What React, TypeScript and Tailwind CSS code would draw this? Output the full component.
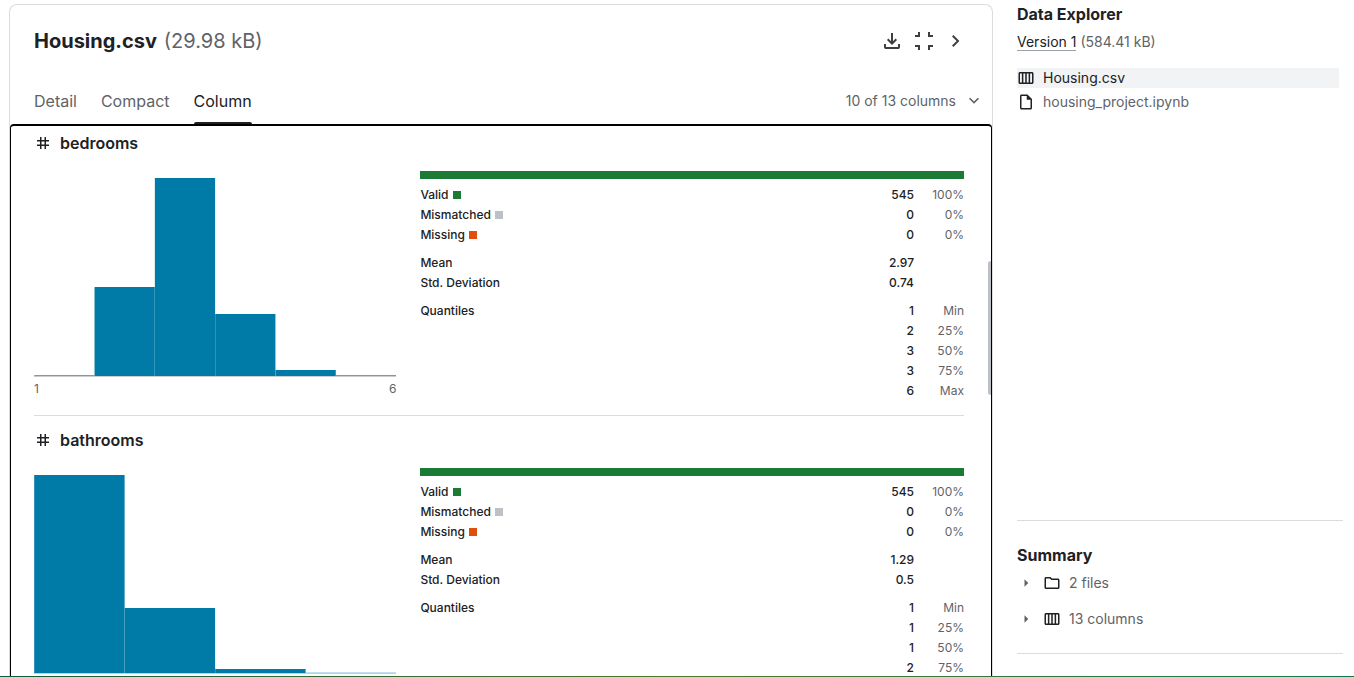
import React from "react";
import {
  MdArrowRight,
  MdOutlineCalendarViewWeek,
  MdOutlineFolder,
  MdOutlineInsertDriveFile,
  MdTag,
} from "react-icons/md";

type Column = {
  name: string;
  counts: number[];
  range?: [string, string];
  mean: string;
  deviation: string;
  quantiles: string[];
};

const columns: Column[] = [
  {
    name: "bedrooms",
    counts: [2, 136, 300, 95, 10, 2],
    range: ["1", "6"],
    mean: "2.97",
    deviation: "0.74",
    quantiles: ["1", "2", "3", "3", "6"],
  },
  {
    name: "bathrooms",
    counts: [401, 133, 10, 1],
    mean: "1.29",
    deviation: "0.5",
    quantiles: ["1", "1", "1", "2"],
  },
];

const quantileLabels = ["Min", "25%", "50%", "75%", "Max"];

function Symbol({ path, className }: { path: string; className: string }) {
  return (
    <svg viewBox="0 -960 960 960" fill="currentColor" className={className} aria-hidden="true">
      <path d={path} />
    </svg>
  );
}

const downloadPath =
  "M480-320 280-520l56-58 104 104v-326h80v326l104-104 56 58-200 200ZM240-160q-33 0-56.5-23.5T160-240v-120h80v120h480v-120h80v120q0 33-23.5 56.5T720-160H240Z";
const exitFullscreenPath =
  "M240-120v-120H120v-80h200v200h-80Zm400 0v-200h200v80H720v120h-80ZM120-640v-80h120v-120h80v200H120Zm520 0v-200h80v120h120v80H640Z";
const chevronRightPath = "M504-480 320-664l56-56 240 240-240 240-56-56 184-184Z";
const chevronDownPath = "M480-344 240-584l56-56 184 184 184-184 56 56-240 240Z";

function Histogram({ counts, range, name }: { counts: number[]; range?: [string, string]; name: string }) {
  const max = Math.max(...counts);
  const width = 361.6 / counts.length;
  return (
    <div className="pt-[7px]">
      <svg
        viewBox="0 0 362 198"
        preserveAspectRatio="none"
        role="img"
        aria-label={`Distribution of ${name}`}
        className="block h-[198px] w-full"
      >
        {counts.map((count, i) => {
          const raw = (count / max) * 198;
          const height = raw < 2 ? raw / 2 : Math.floor(raw);
          return (
            <rect key={i} x={i * width + 0.2} y={198 - height} width={width - 0.1} height={height} fill="#007ba8" />
          );
        })}
      </svg>
      <div className="flex justify-between border-t border-[#c8ccd0] pt-0.5 text-xs leading-5 text-[#5f6368]">
        {range?.map((edge) => <span key={edge}>{edge}</span>)}
      </div>
    </div>
  );
}

function StatRow({ label, swatch, value, note }: { label?: string; swatch?: string; value: string; note?: string }) {
  return (
    <tr className="h-5">
      <th scope="row" className="text-left font-medium">
        <span className="flex items-center gap-1">
          {label}
          {swatch && <span className={`size-2 ${swatch}`} />}
        </span>
      </th>
      <td className="text-right font-medium">{value}</td>
      <td className="w-[50px] text-right text-[#5f6368]">{note}</td>
    </tr>
  );
}

function ColumnSection({ column }: { column: Column }) {
  return (
    <section className="border-b border-[#dadce0] pb-3.5">
      <h2 className="flex items-center gap-2 text-base leading-5 font-semibold">
        <MdTag size={18} />
        {column.name}
      </h2>
      <div className="mt-[18px] grid grid-cols-[2fr_3fr] gap-6">
        <Histogram counts={column.counts} range={column.range} name={column.name} />
        <div>
          <div className="mb-1.5 h-2 bg-[#1b7a33]" />
          <table className="w-full border-collapse text-xs leading-5">
            <tbody>
              <StatRow label="Valid" swatch="bg-[#1b7a33]" value="545" note="100%" />
              <StatRow label="Mismatched" swatch="bg-[#bdc1c6]" value="0" note="0%" />
              <StatRow label="Missing" swatch="bg-[#e04d0c]" value="0" note="0%" />
            </tbody>
            <tbody className="before:block before:h-2">
              <StatRow label="Mean" value={column.mean} />
              <StatRow label="Std. Deviation" value={column.deviation} />
            </tbody>
            <tbody className="before:block before:h-2">
              {column.quantiles.map((value, i) => (
                <StatRow key={i} label={i === 0 ? "Quantiles" : undefined} value={value} note={quantileLabels[i]} />
              ))}
            </tbody>
          </table>
        </div>
      </div>
    </section>
  );
}

function Tab({ label, active }: { label: string; active?: boolean }) {
  return (
    <button
      type="button"
      role="tab"
      aria-selected={!!active}
      className={`flex flex-col justify-between ${active ? "text-[#202124]" : "text-[#5f6368]"}`}
    >
      <span className="leading-6">{label}</span>
      <span className={`h-0.5 w-full rounded-t-sm ${active ? "bg-[#202124]" : ""}`} />
    </button>
  );
}

export default function App() {
  return (
    <div className="flex h-screen flex-col overflow-hidden bg-white font-['Inter',sans-serif] text-[#202124]">
      <div className="flex min-h-0 flex-1 gap-6 pr-[11px] pl-[9px]">
        <main className="mt-1 flex min-w-0 flex-1 flex-col rounded-t-lg border-x border-t border-[#dadce0]">
          <header className="flex items-center justify-between px-6 pt-6">
            <h1 className="text-xl leading-6 font-bold">
              Housing.csv <span className="ml-0.5 font-normal text-[#5f6368]">(29.98 kB)</span>
            </h1>
            <div className="flex gap-2 text-[#3c4043]">
              <button type="button" aria-label="Download">
                <Symbol path={downloadPath} className="size-6" />
              </button>
              <button type="button" aria-label="Exit full screen">
                <Symbol path={exitFullscreenPath} className="size-6" />
              </button>
              <button type="button" aria-label="Next">
                <Symbol path={chevronRightPath} className="size-6" />
              </button>
            </div>
          </header>
          <div className="mt-9 flex h-[35px] items-start justify-between pr-2 pl-6">
            <div role="tablist" className="flex h-full gap-6 text-base">
              <Tab label="Detail" />
              <Tab label="Compact" />
              <Tab label="Column" active />
            </div>
            <button type="button" className="flex items-center gap-2 text-sm leading-6 text-[#5f6368]">
              10 of 13 columns
              <Symbol path={chevronDownPath} className="size-5" />
            </button>
          </div>
          <div className="relative min-h-0 flex-1 overflow-hidden rounded-t-sm border-x border-t-2 border-black pt-[7px] pr-[27px] pl-[23px]">
            <div className="flex flex-col gap-3.5">
              {columns.map((column) => (
                <ColumnSection key={column.name} column={column} />
              ))}
            </div>
            <div className="absolute top-[135px] right-0 h-[134px] w-[3px] rounded-l-sm bg-[#bdc1c6]" />
          </div>
        </main>
        <aside className="flex w-[326px] shrink-0 flex-col pt-1">
          <h2 className="text-base leading-5 font-bold">Data Explorer</h2>
          <p className="mt-2 text-sm leading-5 text-[#5f6368]">
            <a href="#version" className="border-b border-[#9aa0a6] text-[#202124]">
              Version 1
            </a>{" "}
            (584.41 kB)
          </p>
          <nav className="mt-4 mr-1 flex flex-1 flex-col gap-1 text-sm leading-5">
            <a href="#housing" className="flex items-center gap-2 bg-[#f1f3f4]">
              <MdOutlineCalendarViewWeek size={18} />
              Housing.csv
            </a>
            <a href="#notebook" className="flex items-center gap-2 text-[#5f6368]">
              <MdOutlineInsertDriveFile size={18} className="text-[#202124]" />
              housing_project.ipynb
            </a>
          </nav>
          <section className="mb-[22px] border-y border-[#dadce0] pt-6 pb-6">
            <h2 className="text-base leading-5 font-bold">Summary</h2>
            <button type="button" className="mt-2 flex items-center gap-2 text-sm leading-5 text-[#5f6368]">
              <MdArrowRight size={18} />
              <MdOutlineFolder size={18} className="text-[#202124]" />
              2 files
            </button>
            <button type="button" className="mt-4 flex items-center gap-2 text-sm leading-5 text-[#5f6368]">
              <MdArrowRight size={18} />
              <MdOutlineCalendarViewWeek size={18} className="text-[#202124]" />
              13 columns
            </button>
          </section>
        </aside>
      </div>
      <div className="h-px shrink-0 bg-linear-to-r from-[#0b5d3b] via-[#4a7a2f] to-[#0b7a4b]" />
    </div>
  );
}
